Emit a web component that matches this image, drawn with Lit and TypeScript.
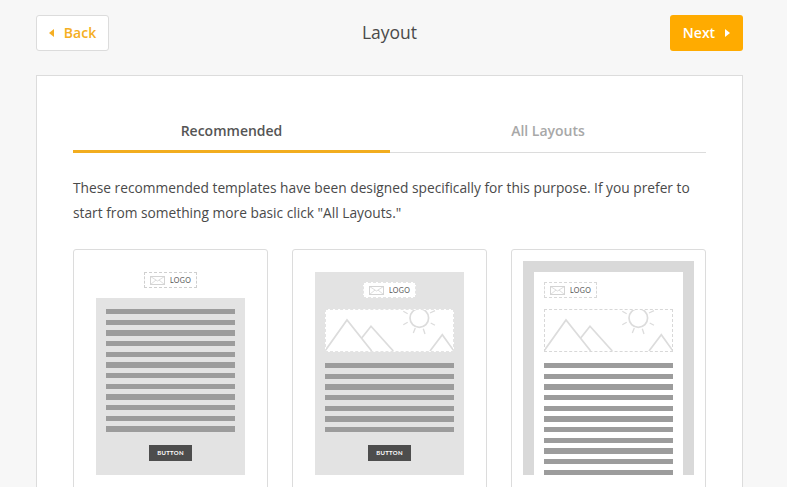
import { LitElement, html, css, svg } from "lit";
import { customElement } from "lit/decorators.js";

const range = (n: number) => Array.from({ length: n }, (_, i) => i);

const envelope = html`<svg class="env" viewBox="0 0 15 9" aria-hidden="true">
  <rect x=".5" y=".5" width="14" height="8" fill="none" stroke="#d4d4d4" />
  <path d="M.5 .5 L7.5 5 L14.5 .5 M.5 8.5 L6 4 M14.5 8.5 L9 4" fill="none" stroke="#d4d4d4" stroke-width=".8" />
</svg>`;

const heroArt = svg`
  <g fill="none" stroke="#dcdcdc" stroke-width="1.7">
    <path d="M0 42 L22 11 L46.700 42" />
    <path d="M36.700 29 L46 17.300 L68.300 42" />
    <path d="M105 42 L117.300 25.700 L129 42" />
    <circle cx="94.300" cy="9" r="9.300" />
    <path d="M78.300 2.300 L82.700 4.700 M78.300 15.700 L82.700 13.300 M88.300 24 L90.300 19 M100 25 L98.300 19.700 M110 16.300 L105.700 14 M110 1.700 L105 4" stroke-width="1.300" />
  </g>`;

@customElement("app-root")
export class AppRoot extends LitElement {
  static styles = css`
    :host {
      display: block;
      height: 100vh;
      overflow: hidden;
      background: #f7f7f7;
      font-family: "Open Sans", sans-serif;
      color: #4a4a4a;
    }
    .page {
      padding: 15px 44px 0 36px;
    }
    .top {
      display: flex;
      align-items: center;
      justify-content: space-between;
      height: 36px;
      margin-bottom: 24px;
    }
    .btn {
      box-sizing: border-box;
      width: 73px;
      height: 36px;
      display: flex;
      align-items: center;
      justify-content: center;
      gap: 10px;
      border-radius: 3px;
      font: 600 14px "Open Sans", sans-serif;
      padding: 0 0 1px;
    }
    .back {
      background: #fff;
      border: 1px solid #dcdcdc;
      color: #f5ae22;
    }
    .next {
      background: #ffab00;
      border: 0;
      color: #fff;
    }
    .caret {
      width: 5px;
      height: 8px;
      fill: currentColor;
      flex: none;
    }
    h1 {
      margin: 0;
      padding-bottom: 2px;
      font-size: 17.500px;
      font-weight: 500;
      color: #4a4a4a;
    }
    .panel {
      background: #fff;
      border: 1px solid #dcdcdc;
      padding: 34px 36px 0;
      height: 500px;
      box-sizing: border-box;
    }
    .tabs {
      display: grid;
      grid-template-columns: 317px 1fr;
      border-bottom: 1px solid #dcdcdc;
    }
    .tab {
      height: 41px;
      line-height: 42px;
      text-align: center;
      font-size: 14px;
      font-weight: 600;
      color: #a8a8a8;
    }
    .tab.on {
      color: #555;
      height: 40px;
      border-bottom: 3px solid #f2ad1f;
      margin-bottom: -1px;
      box-sizing: content-box;
    }
    p {
      margin: 22px 0 24px;
      font-size: 13.750px;
      line-height: 25px;
      color: #4a4a4a;
    }
    .cards {
      display: grid;
      grid-template-columns: repeat(3, 195px);
      column-gap: 24px;
    }
    .card {
      box-sizing: border-box;
      height: 300px;
      border: 1px solid #dcdcdc;
      border-radius: 3px;
      display: flex;
      justify-content: center;
      background: #fff;
    }
    .thumb {
      box-sizing: border-box;
      width: 149px;
      height: 203px;
      margin-top: 22px;
      display: flex;
      flex-direction: column;
      align-items: center;
    }
    .grey {
      background: #e3e3e3;
    }
    .logo {
      box-sizing: border-box;
      width: 53px;
      height: 16px;
      display: flex;
      align-items: center;
      gap: 5px;
      padding-left: 5px;
      border: 1px dashed #cfcfcf;
      font: 400 7px Lato, sans-serif;
      letter-spacing: 0.400px;
      color: #555;
      flex: none;
    }
    .env {
      width: 15px;
      height: 9px;
      flex: none;
    }
    .block {
      box-sizing: border-box;
      width: 149px;
      height: 177px;
      padding: 11px 10px 0;
      margin-top: 10px;
      display: flex;
      flex-direction: column;
      align-items: center;
      flex: none;
    }
    .bars {
      width: 129px;
      display: flex;
      flex-direction: column;
      gap: 5.330px;
      flex: none;
    }
    .bar {
      height: 5.330px;
      background: #9c9c9c;
      flex: none;
    }
    .cta {
      width: 43px;
      height: 16px;
      margin-top: 13px;
      background: #4d4d4d;
      color: #fff;
      font: 700 6px/16px Lato, sans-serif;
      letter-spacing: 0.300px;
      text-align: center;
      flex: none;
    }
    .thumb.two {
      padding: 10px 10px 0;
    }
    .two .logo {
      background: #fff;
      border-color: #e3e3e3;
    }
    .hero {
      box-sizing: border-box;
      width: 129px;
      height: 43px;
      margin: 11px 0 11px;
      flex: none;
      position: relative;
      overflow: hidden;
    }
    .two .hero {
      background: #fff;
      border: 1px dashed #e3e3e3;
    }
    .three .hero {
      border: 1px dashed #d8d8d8;
    }
    .three .logo {
      border-color: #d8d8d8;
    }
    .hero svg {
      display: block;
      width: 129px;
      height: 42px;
      margin: -1px;
    }
    .thumb.three {
      width: 171px;
      height: 214px;
      margin-top: 11px;
      background: #d9d9d9;
      padding: 11px 11px 0;
      overflow: hidden;
    }
    .sheet {
      box-sizing: border-box;
      width: 149px;
      height: 203px;
      background: #fff;
      padding: 10px 10px 0;
      overflow: hidden;
      display: flex;
      flex-direction: column;
      flex: none;
    }
  `;

  private bars(n: number) {
    return html`<div class="bars">${range(n).map(() => html`<div class="bar"></div>`)}</div>`;
  }

  private logo() {
    return html`<div class="logo">${envelope}<span>LOGO</span></div>`;
  }

  private hero() {
    return html`<div class="hero"><svg viewBox="0 0 129 42" aria-hidden="true">${heroArt}</svg></div>`;
  }

  render() {
    return html`
      <div class="page">
        <div class="top">
          <button class="btn back">
            <svg class="caret" viewBox="0 0 5 8" aria-hidden="true"><path d="M5 0V8L0 4Z" /></svg>
            Back
          </button>
          <h1>Layout</h1>
          <button class="btn next">
            Next
            <svg class="caret" viewBox="0 0 5 8" aria-hidden="true"><path d="M0 0V8L5 4Z" /></svg>
          </button>
        </div>
        <section class="panel">
          <div class="tabs">
            <div class="tab on">Recommended</div>
            <div class="tab">All Layouts</div>
          </div>
          <p>These recommended templates have been designed specifically for this purpose. If you prefer to start from something more basic click "All Layouts."</p>
          <div class="cards">
            <div class="card">
              <div class="thumb">
                ${this.logo()}
                <div class="block grey">
                  ${this.bars(12)}
                  <div class="cta">BUTTON</div>
                </div>
              </div>
            </div>
            <div class="card">
              <div class="thumb grey two">
                ${this.logo()}
                ${this.hero()}
                ${this.bars(7)}
                <div class="cta">BUTTON</div>
              </div>
            </div>
            <div class="card">
              <div class="thumb three">
                <div class="sheet">
                  ${this.logo()}
                  ${this.hero()}
                  ${this.bars(11)}
                </div>
              </div>
            </div>
          </div>
        </section>
      </div>
    `;
  }
}
